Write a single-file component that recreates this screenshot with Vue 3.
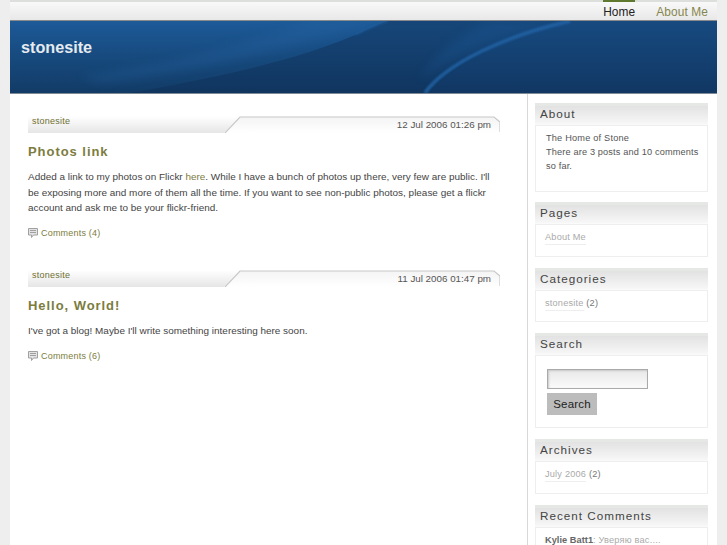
<script setup>
const posts = [
  { id: 1, date: '12 Jul 2006 01:26 pm', title: 'Photos link', comments: 'Comments (4)' },
  { id: 2, date: '11 Jul 2006 01:47 pm', title: 'Hello, World!', comments: 'Comments (6)' }
]
</script>

<template>
  <div class="page">
    <nav class="nav">
      <a class="tab active">Home</a>
      <a class="tab">About Me</a>
    </nav>
    <header class="banner">
      <svg class="swoosh" viewBox="0 0 707 72" preserveAspectRatio="none">
        <defs>
          <linearGradient id="bg" x1="0" y1="0" x2="0" y2="1">
            <stop offset="0" stop-color="#1d5a98" />
            <stop offset="0.5" stop-color="#174a7e" />
            <stop offset="1" stop-color="#123b66" />
          </linearGradient>
          <linearGradient id="dark" x1="0" y1="0" x2="0" y2="1">
            <stop offset="0" stop-color="#164679" />
            <stop offset="1" stop-color="#10355f" />
          </linearGradient>
          <linearGradient id="right" x1="0" y1="0" x2="0" y2="1">
            <stop offset="0" stop-color="#174a80" />
            <stop offset="1" stop-color="#113763" />
          </linearGradient>
          <filter id="soft" x="-10%" y="-50%" width="120%" height="200%">
            <feGaussianBlur stdDeviation="5" />
          </filter>
          <filter id="edge" x="-10%" y="-50%" width="120%" height="200%">
            <feGaussianBlur stdDeviation="0.8" />
          </filter>
        </defs>
        <rect width="707" height="72" fill="url(#bg)" />
        <path d="M90 62C180 52 270 30 375 0H300C220 28 150 44 70 55Z" fill="#2a69aa" opacity=".25" filter="url(#soft)" />
        <path d="M120 72C210 56 290 38 345 14 355 10 365 4 378 0H707V72Z" fill="url(#dark)" />
        <path d="M410 60C440 35 500 12 560 0H480C450 12 425 32 410 60Z" fill="#1f5c9b" opacity=".3" filter="url(#soft)" />
        <path d="M420 72C440 45 500 15 562 0H707V72Z" fill="url(#right)" />
        <path d="M415 72C436 42 498 14 560 0" fill="none" stroke="#2364a6" stroke-width="3.5" opacity=".9" filter="url(#edge)" />
        <path d="M345 14C355 10 365 4 378 0" fill="none" stroke="#215f9f" stroke-width="2" opacity=".55" filter="url(#edge)" />
      </svg>
      <h1 class="site">stonesite</h1>
    </header>
    <div class="body">
      <main class="content">
        <article v-for="post in posts" :key="post.id" class="post">
          <div class="bar">
            <svg class="bar-bg" viewBox="0 0 472 17" preserveAspectRatio="none">
              <defs>
                <linearGradient :id="'l' + post.id" x1="0" y1="0" x2="0" y2="1">
                  <stop offset="0" stop-color="#ffffff" />
                  <stop offset="1" stop-color="#e6e6e6" />
                </linearGradient>
                <linearGradient :id="'r' + post.id" x1="0" y1="0" x2="0" y2="1">
                  <stop offset="0" stop-color="#f4f4f4" />
                  <stop offset="1" stop-color="#ffffff" />
                </linearGradient>
              </defs>
              <path d="M0 0H212L196 17H0Z" :fill="`url(#l${post.id})`" />
              <path d="M197 17L212 1H466L472 6V17Z" :fill="`url(#r${post.id})`" />
              <path d="M197 17L212 1H466L472 6V16" fill="none" stroke="#c8c8c8" stroke-width="1.2" />
            </svg>
            <span class="cat">stonesite</span>
            <span class="date">{{ post.date }}</span>
          </div>
          <h2 class="title">{{ post.title }}</h2>
          <p v-if="post.id === 1" class="text">
            Added a link to my photos on Flickr <a class="link">here</a>. While I have a bunch of photos up there, very few are public. I'll be exposing more and more of them all the time. If you want to see non-public photos, please get a flickr account and ask me to be your flickr-friend.
          </p>
          <p v-else class="text">I've got a blog! Maybe I'll write something interesting here soon.</p>
          <div class="comments">
            <svg width="10" height="10" viewBox="0 0 10 10">
              <path d="M.5.5H9.5V7H5.5L3.5 9.5V7H.5Z" fill="#e4e4e4" stroke="#a0a0a0" />
              <path d="M2 2.5H8M2 4.5H8" stroke="#a0a0a0" />
            </svg>
            <a class="link">{{ post.comments }}</a>
          </div>
        </article>
      </main>
      <aside class="side">
        <section class="widget first">
          <h3 class="wh">About</h3>
          <div class="wb about">
            <p>The Home of Stone</p>
            <p class="stats">There are 3 posts and 10 comments so far.</p>
          </div>
        </section>
        <section class="widget">
          <h3 class="wh">Pages</h3>
          <div class="wb list tall"><a class="slink">About Me</a></div>
        </section>
        <section class="widget">
          <h3 class="wh">Categories</h3>
          <div class="wb list"><a class="slink">stonesite</a> (2)</div>
        </section>
        <section class="widget">
          <h3 class="wh">Search</h3>
          <div class="wb search">
            <div class="input"></div>
            <button class="btn">Search</button>
          </div>
        </section>
        <section class="widget">
          <h3 class="wh">Archives</h3>
          <div class="wb list tall"><a class="slink">July 2006</a> (2)</div>
        </section>
        <section class="widget">
          <h3 class="wh">Recent Comments</h3>
          <div class="wb recent"><b>Kylie Batt1</b><span>: Уверяю вас....</span></div>
        </section>
      </aside>
    </div>
  </div>
</template>

<style>
html, body { margin: 0; height: 545px; overflow: hidden; background: #eeeeee; }
</style>

<style scoped>
.page {
  width: 707px;
  height: 545px;
  margin-left: 10px;
  overflow: hidden;
  background: #fff;
  font-family: "Liberation Sans", Arial, sans-serif;
  color: #444;
}
.nav {
  height: 21px;
  box-sizing: border-box;
  border-top: 2px solid #dcdfdc;
  border-bottom: 1px solid #8a8a8a;
  background: linear-gradient(#f9f9f9, #e8e8e8);
  display: flex;
  justify-content: flex-end;
  padding-right: 9px;
  gap: 21px;
}
.tab {
  font-size: 11.9px;
  line-height: 16px;
  letter-spacing: 0.1px;
  color: #86864e;
  margin-top: -2px;
  padding-top: 2px;
  border-top: 2px solid transparent;
  height: 16px;
}
.tab.active { color: #222; border-top-color: #5f7a2e; }
.banner {
  height: 72px;
  border-bottom: 1px solid #7f8a96;
  position: relative;
  overflow: hidden;
}
.swoosh { position: absolute; inset: 0; width: 100%; height: 100%; display: block; }
.site {
  position: relative;
  margin: 0;
  padding: 16px 0 0 11px;
  font-size: 16.2px;
  line-height: 20px;
  font-weight: 700;
  color: #e6ebf0;
}
.body { display: flex; }
.content {
  width: 518px;
  height: 451px;
  box-sizing: border-box;
  padding: 22px 27px 0 18px;
  border-right: 1px solid #d8d8d8;
  flex: none;
}
.post { margin-bottom: 30.5px; }
.bar {
  position: relative;
  height: 17px;
  display: flex;
  justify-content: space-between;
}
.bar-bg { position: absolute; inset: 0; width: 100%; height: 100%; display: block; }
.cat {
  position: relative;
  font-size: 9px;
  line-height: 11px;
  letter-spacing: 0.25px;
  padding-left: 4px;
  color: #6f6f30;
}
.date {
  position: relative;
  font-size: 9.8px;
  line-height: 18px;
  padding-right: 9px;
  color: #555;
}
.title {
  margin: 11px 0 0;
  font-size: 13px;
  line-height: 16px;
  letter-spacing: 0.95px;
  font-weight: 700;
  color: #7c7c3e;
}
.text {
  margin: 9px 0 0;
  font-size: 9.95px;
  line-height: 15.6px;
  color: #444;
}
.link { color: #7c7c3e; }
.comments {
  margin-top: 10px;
  display: flex;
  align-items: center;
  gap: 3px;
  font-size: 9px;
  line-height: 14px;
  letter-spacing: 0.2px;
}
.side {
  width: 173px;
  padding: 9px 0 0 7px;
  flex: none;
}
.widget { margin-bottom: 11px; }
.widget.first { margin-bottom: 10px; }
.wh {
  margin: 0;
  height: 22px;
  box-sizing: border-box;
  border-top: 3px solid #e6e8e6;
  background: linear-gradient(#e1e2e1, #f6f6f6 90%, #fbfbfb);
  font-size: 11.7px;
  font-weight: 400;
  line-height: 15px;
  letter-spacing: 1px;
  padding-left: 5px;
  color: #444;
}
.wb {
  border: 1px solid #eeeeee;
  font-size: 9.2px;
  line-height: 14px;
  color: #777;
  letter-spacing: 0.2px;
  box-sizing: border-box;
}
.wb p { margin: 0; color: #555; }
.about { padding: 5px 3px 0 10px; height: 67px; }
.stats { letter-spacing: 0.15px; }
.list { padding: 5px 9px 0; height: 32px; }
.list.tall { height: 33px; }
.slink { color: #aaa; border-bottom: 1px solid #eee; padding-bottom: 2px; }
.search { padding: 13px 11px 0; height: 73px; }
.input {
  width: 101px;
  height: 20px;
  box-sizing: border-box;
  border: 1px solid #aaa;
  box-shadow: inset 1px 1px 2px #c8c8c8;
  background: linear-gradient(#e8e8e8, #fbfbfb);
}
.btn {
  display: block;
  width: 50px;
  height: 22px;
  margin: 4px 0 0;
  padding: 0 0 1px;
  border: 0;
  background: #bcbcbc;
  font-family: inherit;
  font-size: 11.5px;
  letter-spacing: 0.2px;
  color: #222;
}
.recent { padding: 5px 9px 0; height: 40px; color: #aaa; }
.recent b { color: #666; letter-spacing: 0.05px; }
</style>
